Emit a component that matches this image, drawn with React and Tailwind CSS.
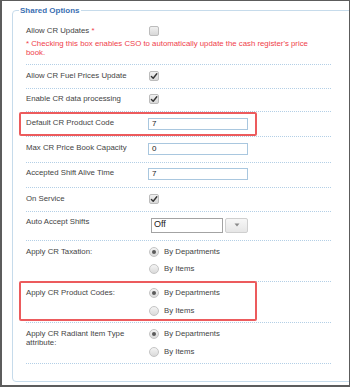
import React from "react";

const FONT = { fontFamily: '"Liberation Sans", Arial, sans-serif' };

function Checkbox({ checked }) {
  return (
    <span className="ml-[1px] w-[10px] h-[10px] shrink-0 rounded-[2px] border border-[#bcbcbc] bg-linear-to-b from-[#f0f0f0] to-[#d8d8d8] flex items-center justify-center">
      {checked && (
        <svg width="8" height="8" viewBox="0 0 8 8">
          <path d="M1.4 4.5 L3.2 6.2 L6.8 1.7" fill="none" stroke="#333" strokeWidth="1.4" strokeLinecap="round" strokeLinejoin="round" />
        </svg>
      )}
    </span>
  );
}

function Radio({ checked, label }) {
  return (
    <div className="flex items-center h-[10px]">
      <span className="ml-[1px] w-[10px] h-[10px] shrink-0 rounded-full border border-[#c4c4c4] bg-linear-to-b from-[#f4f4f4] to-[#dadada] flex items-center justify-center">
        {checked && <span className="w-[4px] h-[4px] rounded-full bg-[#5a5a5a]" />}
      </span>
      <span className="ml-[5px] leading-[10px] text-[#444]">{label}</span>
    </div>
  );
}

function TextInput({ value }) {
  return (
    <div className="mt-[2px] w-[100px] h-[12px] border border-[#a9c7df] bg-white flex items-center pl-[3px] text-[8px] leading-[10px] text-[#222]">
      {value}
    </div>
  );
}

function Row({ h, pt, label, children, highlight, note, lh = "leading-[10px]" }) {
  return (
    <div
      className="relative flex flex-col w-[305px] border-b border-dotted border-[#b3cfe6]"
      style={{ height: h, paddingTop: pt }}
    >
      <div className="flex items-start">
        <div className={`w-[122px] shrink-0 pr-[4px] text-[#444] ${lh}`}>{label}</div>
        <div className="flex flex-col">{children}</div>
      </div>
      {note}
      {highlight && (
        <div
          className="absolute left-[-7px] w-[238px] border-2 border-[#ec5b5d] rounded-[2px] pointer-events-none"
          style={{ top: highlight.top, height: highlight.h }}
        />
      )}
    </div>
  );
}

export default function App() {
  return (
    <div
      className="w-[350px] h-[387px] overflow-hidden bg-white border border-l-2 border-b-2 border-[#5c5c5c]"
      style={FONT}
    >
      <div className="relative ml-[10px] mt-[9px] w-[360px] h-[372px] border border-[#c6dbeb] rounded-[4px] pt-[7px] pl-[13px] text-[7.8px]">
        <span className="absolute top-[-6px] left-[6px] px-[1px] bg-white text-[#3b70b2] font-bold text-[8px] leading-[12px]">
          Shared Options
        </span>

        <Row
          h={47}
          pt={8}
          label={<>Allow CR Updates <span className="text-[#ef3e4a]">*</span></>}
          note={
            <p className="mt-[3px] text-[#ef3e4a] leading-[9px] pr-[10px]">
              * Checking this box enables CSO to automatically update the cash register's price
              <br />
              book.
            </p>
          }
        >
          <div className="flex items-center h-[10px]">
            <Checkbox />
          </div>
        </Row>

        <Row h={24} pt={6} label="Allow CR Fuel Prices Update">
          <div className="flex items-center h-[10px]">
            <Checkbox checked />
          </div>
        </Row>

        <Row h={23} pt={5} label="Enable CR data processing">
          <div className="flex items-center h-[10px]">
            <Checkbox checked />
          </div>
        </Row>

        <Row h={25} pt={6} label="Default CR Product Code" highlight={{ top: 0, h: 24 }}>
          <div className="flex items-center h-[10px]">
            <TextInput value="7" />
          </div>
        </Row>

        <Row h={26} pt={6} label="Max CR Price Book Capacity">
          <div className="flex items-center h-[10px]">
            <TextInput value="0" />
          </div>
        </Row>

        <Row h={25} pt={5} label="Accepted Shift Alive Time">
          <div className="flex items-center h-[10px]">
            <TextInput value="7" />
          </div>
        </Row>

        <Row h={24} pt={6} label="On Service">
          <div className="flex items-center h-[10px]">
            <Checkbox checked />
          </div>
        </Row>

        <Row h={29} pt={5} label="Auto Accept Shifts">
          <div className="flex items-center h-[10px] mt-[3px]">
            <div className="ml-[3px] w-[72px] h-[15px] border border-[#a3a3a3] bg-white flex items-center pl-[2px] text-[9px] text-[#222]">
              Off
            </div>
            <div className="ml-[2px] w-[23px] h-[15px] border border-[#cfcfcf] rounded-[2px] bg-linear-to-b from-[#f7f7f7] to-[#e6e6e6] flex items-center justify-center">
              <svg width="6" height="4" viewBox="0 0 6 4">
                <path d="M0.5 0.5 L5.5 0.5 L3 3.5 Z" fill="#8a8a8a" />
              </svg>
            </div>
          </div>
        </Row>

        <Row h={41} pt={6} label="Apply CR Taxation:">
          <div className="flex flex-col gap-[7px]">
            <Radio checked label="By Departments" />
            <Radio label="By Items" />
          </div>
        </Row>

        <Row h={41} pt={6} label="Apply CR Product Codes:" highlight={{ top: -1, h: 40 }}>
          <div className="flex flex-col gap-[8px]">
            <Radio checked label="By Departments" />
            <Radio label="By Items" />
          </div>
        </Row>

        <Row h={41} pt={6} lh="leading-[9px]" label="Apply CR Radiant Item Type attribute:">
          <div className="flex flex-col gap-[8px]">
            <Radio checked label="By Departments" />
            <Radio label="By Items" />
          </div>
        </Row>
      </div>
    </div>
  );
}
